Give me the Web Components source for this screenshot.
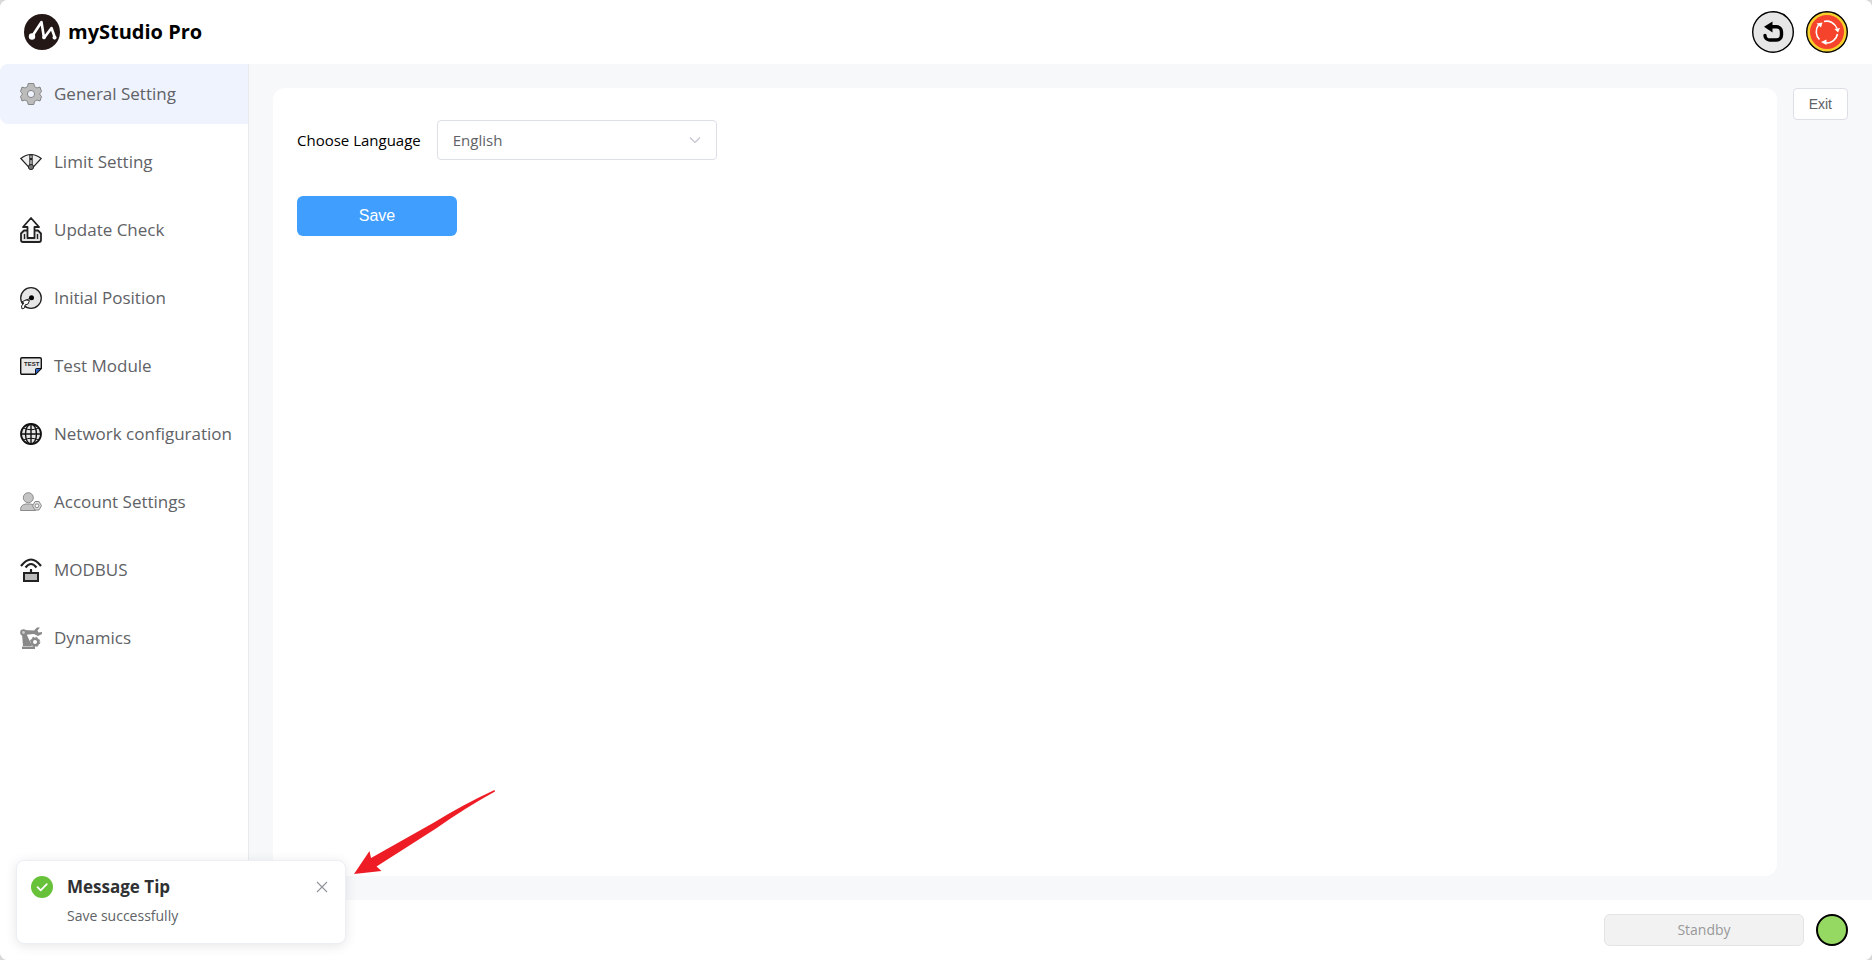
<!DOCTYPE html>
<html lang="en">
<head>
<meta charset="utf-8">
<title>myStudio Pro</title>
<style>
  html, body { margin: 0; height: 100%; background: #d8d8d8; }
  body { font-family: "Open Sans", "Noto Sans", sans-serif; color: #000; }
</style>
</head>
<body>
<studio-app></studio-app>
<script>
const define = (name, html) => {
  const template = document.createElement('template');
  template.innerHTML = html;
  customElements.define(name, class extends HTMLElement {
    constructor() {
      super();
      this.attachShadow({ mode: 'open' }).append(template.content.cloneNode(true));
    }
  });
};

define('app-header', `
<style>
  :host { display: flex; align-items: center; justify-content: space-between; height: 64px; padding: 0 24px; background: #fff; box-sizing: border-box; }
  .brand { display: flex; align-items: center; gap: 8px; }
  h1 { margin: 0; font-size: 20px; line-height: 32px; font-weight: 700; }
  .actions { display: flex; gap: 12px; }
  button { padding: 0; border: 0; background: none; width: 42px; height: 42px; }
  svg { display: block; }
</style>
<div class="brand">
  <svg width="36" height="36" viewBox="0 0 36 36" aria-hidden="true">
    <circle cx="18" cy="18" r="18" fill="#231815"/>
    <path d="M8 22.500L17.500 8L20 24L27.500 14L31 24" fill="none" stroke="#fff" stroke-width="2.600" stroke-linecap="round" stroke-linejoin="round"/>
    <circle cx="8" cy="22.500" r="3.200" fill="#fff"/><circle cx="20" cy="23.500" r="1.800" fill="#fff"/><circle cx="30.500" cy="23.500" r="2" fill="#fff"/>
  </svg>
  <h1>myStudio Pro</h1>
</div>
<div class="actions">
  <button type="button" aria-label="Back">
    <svg width="42" height="42" viewBox="0 0 42 42">
      <circle cx="21" cy="21" r="20.300" fill="#e6e6e6" stroke="#000" stroke-width="1.400"/>
      <path d="M18 15.800H24.500A5 5 0 0 1 29.500 20.800V24A5 5 0 0 1 24.500 29H17.500A4.600 4.600 0 0 1 13 24.500" fill="none" stroke="#000" stroke-width="3.400" stroke-linecap="round"/>
      <path d="M12 15.800L20.500 10.500V21.500Z" fill="#000"/>
    </svg>
  </button>
  <button type="button" aria-label="Emergency stop">
    <svg width="42" height="42" viewBox="0 0 42 42">
      <circle cx="21" cy="21" r="20.300" fill="#f7cf2c" stroke="#000" stroke-width="1.400"/>
      <circle cx="21" cy="21" r="17" fill="#f5432c"/>
      <g fill="none" stroke="#fff" stroke-width="1.600">
        <path d="M18 10.500A11 11 0 0 1 31 17.500"/>
        <path d="M31.500 23A11 11 0 0 1 20 32"/>
        <path d="M13.500 28.500A11 11 0 0 1 12.500 14"/>
      </g>
      <path d="M28.500 18L34 17L32 21.500ZM20.500 28.500V34L15 31ZM10.500 12.500L16.500 11.500L15 16.500Z" fill="#fff"/>
    </svg>
  </button>
</div>`);

define('nav-item', `
<style>
  :host { display: block; }
  a { display: flex; align-items: center; gap: 12px; height: 60px; padding: 0 20px; border-radius: 8px; color: #606266; text-decoration: none; font-size: 17px; line-height: 24px; white-space: nowrap; }
  :host([active]) a { background: #eff3fe; border-radius: 8px 0 0 8px; }
  ::slotted(svg) { display: block; flex: none; width: 22px; height: 26px; }
</style>
<a href="#"><slot name="icon"></slot><slot></slot></a>`);

define('side-nav', `
<style>
  :host { display: block; background: #fff; border-right: 1px solid #e8eaee; }
  nav { display: flex; flex-direction: column; gap: 8px; }
</style>
<nav aria-label="Settings">
  <nav-item active><svg slot="icon" viewBox="0 0 22 26"><path d="M8.200 2.500H13.800L14.500 5.600L17 7L20 6L21.500 10.500L19.500 13L21.500 15.500L20 20L17 19L14.500 20.400L13.800 23.500H8.200L7.500 20.400L5 19L2 20L.5 15.500L2.500 13L.5 10.500L2 6L5 7L7.500 5.600Z" fill="#bcbcbc" stroke="#858585"/><circle cx="11" cy="13" r="3.600" fill="#eff3fe" stroke="#858585"/></svg>General Setting</nav-item>
  <nav-item><svg slot="icon" viewBox="0 0 22 26"><path d="M.8 9.500Q11 1.500 21.200 9.500L12.500 19H9.500Z" fill="#eee" stroke="#222" stroke-width="1.200"/><path d="M9.800 6H12.200V17H9.800Z" fill="#ccc" stroke="#222"/><circle cx="11" cy="10" r="1.200" fill="#222"/><circle cx="11" cy="18" r="2.600" fill="#777" stroke="#222"/></svg>Limit Setting</nav-item>
  <nav-item><svg slot="icon" viewBox="0 0 22 26"><path d="M4 13.500L1 16.500V23Q1 25 3 25H19Q21 25 21 23V16.500L18 13.500Z" fill="#e5e5e5" stroke="#222" stroke-width="1.800" stroke-linejoin="round"/><path d="M4.500 17V22M17.500 17V22" stroke="#222" stroke-width="1.400"/><path d="M11 1L19 10H14.500V21H7.500V10H3Z" fill="#fff" stroke="#222" stroke-width="1.800" stroke-linejoin="round"/></svg>Update Check</nav-item>
  <nav-item><svg slot="icon" viewBox="0 0 22 26"><circle cx="11" cy="13" r="10.300" fill="#e6e6e6" stroke="#222" stroke-width="1.300"/><path d="M11 13L5 15.500V20" fill="none" stroke="#222"/><circle cx="11.500" cy="12.800" r="2.500" fill="#000"/><path d="M1.500 17L6 15L9.500 15.500L8 19L5 20L4.500 23L2 24L1.500 21L4 18Z" fill="#fff" stroke="#222"/></svg>Initial Position</nav-item>
  <nav-item><svg slot="icon" viewBox="0 0 22 26"><path d="M2 4.700H20Q21.300 4.700 21.300 6V15.500L15.500 21.300H2Q.7 21.300 .7 20V6Q.7 4.700 2 4.700Z" fill="#e8e8e8" stroke="#111" stroke-width="1.400"/><path d="M15.500 21.300V16.500Q15.500 15.500 16.500 15.500H21.300Z" fill="#2d64d0" stroke="#111"/><text x="4" y="13" font-family="Liberation Sans, sans-serif" font-size="6" font-weight="700" fill="#222">TEST</text></svg>Test Module</nav-item>
  <nav-item><svg slot="icon" viewBox="0 0 22 26"><g fill="none" stroke="#111" stroke-width="1.400"><circle cx="11" cy="13" r="10" fill="#e5e5e5" stroke-width="1.800"/><ellipse cx="11" cy="13" rx="5.500" ry="10"/><path d="M11 3V23M1 13H21"/><path d="M3.500 7Q11 10.500 18.500 7M3.500 19Q11 15.500 18.500 19" stroke-width="1"/></g></svg>Network configuration</nav-item>
  <nav-item><svg slot="icon" viewBox="0 0 22 26"><g fill="#c4c4c4" stroke="#8a8a8a"><path d="M.6 21.500Q.3 15.500 6 15H10.500Q15.500 15.500 15.500 21.500Z"/><circle cx="8.300" cy="8.700" r="5"/><path d="M15 12.500H19L21.500 16.800L19 21H15L12.500 16.800Z" fill="#ddd"/><circle cx="17" cy="16.800" r="1.900" fill="#fff"/></g></svg>Account Settings</nav-item>
  <nav-item><svg slot="icon" viewBox="0 0 22 26"><path d="M4 16H18V24H4Z" fill="#bbb" stroke="#222" stroke-width="2"/><path d="M1 9Q11 -4 21 9M5.500 10.500Q11 3.500 16.500 10.500M11 12V16" fill="none" stroke="#222" stroke-width="2.200"/></svg>MODBUS</nav-item>
  <nav-item><svg slot="icon" viewBox="0 0 22 26"><path d="M2 21.500H15V24H2ZM3 21L2 9L6 8L12 21ZM3 5L14 5.500L17 2.500H20L17.500 5.500L18.500 7.500L22 7V9L18 11L14 9L3 10Z" fill="#898989"/><circle cx="3.500" cy="7.500" r="3.300" fill="#898989"/><circle cx="3.500" cy="7.500" r="1.400" fill="#ccc"/><circle cx="15" cy="17" r="3.300" fill="#fff" stroke="#898989" stroke-width="2.600"/><circle cx="15" cy="17" r="4.800" fill="none" stroke="#898989" stroke-dasharray="2 1.800"/></svg>Dynamics</nav-item>
</nav>`);

define('language-select', `
<style>
  :host { display: block; }
  .row { display: flex; align-items: center; gap: 16px; }
  label { font-size: 15px; line-height: 24px; }
  .field { display: grid; align-items: center; width: 280px; }
  select, svg { grid-area: 1 / 1; }
  select { appearance: none; width: 100%; height: 40px; padding: 0 15px; border: 1px solid #dcdfe6; border-radius: 4px; background: #fff; color: #606266; font-family: inherit; font-size: 15px; box-sizing: border-box; }
  svg { justify-self: end; margin-right: 16px; pointer-events: none; }
</style>
<div class="row">
  <label for="language">Choose Language</label>
  <div class="field">
    <select id="language"><option>English</option></select>
    <svg width="12" height="8" viewBox="0 0 12 8" aria-hidden="true"><path d="M1 1.500L6 6.500L11 1.500" fill="none" stroke="#c0c4cc" stroke-width="1.200"/></svg>
  </div>
</div>`);

define('ui-button', `
<style>
  :host { display: block; }
  button { display: block; width: 100%; height: 32px; padding: 0 15px; border: 1px solid #dcdfe6; border-radius: 4px; background: #fff; color: #606266; font-family: "Liberation Sans", sans-serif; font-size: 14px; box-sizing: border-box; }
  :host([primary]) { width: 160px; }
  :host([primary]) button { height: 40px; border: 0; border-radius: 6px; background: #409eff; color: #fff; font-size: 16px; }
</style>
<button type="button"><slot></slot></button>`);

define('settings-panel', `
<style>
  :host { display: flex; flex-direction: column; align-items: flex-start; gap: 36px; padding: 32px 24px; background: #fff; border-radius: 12px; box-sizing: border-box; }
</style>
<language-select></language-select>
<ui-button primary>Save</ui-button>`);

define('status-bar', `
<style>
  :host { display: flex; align-items: center; justify-content: flex-end; gap: 12px; height: 60px; padding: 0 24px; background: #fff; box-sizing: border-box; }
  output { width: 200px; height: 32px; border: 1px solid #e4e4e4; border-radius: 6px; background: #f2f2f2; color: #999; font-size: 14px; line-height: 30px; text-align: center; box-sizing: border-box; }
  .lamp { width: 32px; height: 32px; border: 2px solid #000; border-radius: 50%; background: #95d862; box-sizing: border-box; }
</style>
<output>Standby</output><div class="lamp" role="img" aria-label="Ready"></div>`);

define('message-toast', `
<style>
  :host { display: flex; align-items: flex-start; gap: 14px; width: 330px; height: 84px; padding: 14px; border: 1px solid #ebeef5; border-radius: 8px; background: #fff; box-shadow: 0 2px 12px rgba(0,0,0,.1); box-sizing: border-box; }
  .text { flex: 1; }
  h2 { margin: 0; color: #303133; font-size: 17px; line-height: 24px; font-weight: 700; }
  p { margin: 5px 0 0; color: #606266; font-size: 14px; line-height: 24px; }
  button { margin: 4px 1px 0 0; padding: 0; border: 0; background: none; }
  svg { display: block; }
  .mark { margin-top: 1px; }
</style>
<svg class="mark" width="22" height="22" viewBox="0 0 22 22" aria-hidden="true"><circle cx="11" cy="11" r="11" fill="#67c23a"/><path d="M6.500 11.200L9.700 14.300L15.800 8.200" fill="none" stroke="#fff" stroke-width="1.800" stroke-linecap="round" stroke-linejoin="round"/></svg>
<div class="text"><h2><slot name="title"></slot></h2><p><slot></slot></p></div>
<button type="button" aria-label="Close"><svg width="16" height="16" viewBox="0 0 16 16"><path d="M3 3L13 13M13 3L3 13" stroke="#909399" stroke-width="1.100"/></svg></button>`);

define('studio-app', `
<style>
  :host { display: grid; grid-template-rows: auto 1fr auto; min-height: 100vh; position: relative; background: #f7f8fa; border-radius: 8px; overflow: hidden; }
  .middle { display: grid; grid-template-columns: 249px 1fr; }
  main { display: grid; grid-template-columns: 1fr auto; gap: 16px; padding: 24px; align-items: start; }
  settings-panel { align-self: stretch; }
  message-toast { position: absolute; left: 16px; bottom: 16px; }
  .pointer { position: absolute; left: 354px; bottom: 84px; }
</style>
<app-header></app-header>
<div class="middle">
  <side-nav></side-nav>
  <main>
    <settings-panel></settings-panel>
    <ui-button>Exit</ui-button>
  </main>
</div>
<status-bar></status-bar>
<message-toast role="status"><span slot="title">Message Tip</span>Save successfully</message-toast>
<svg class="pointer" width="142" height="86" viewBox="0 0 142 86" aria-hidden="true"><path d="M0 84L15.500 61L17 68L80 32.500Q110 14 140.500 0L141 1.500Q111 18 82 38.500L22.500 76.500L27.500 81Z" fill="#ee1c25"/></svg>`);
</script>
</body>
</html>
